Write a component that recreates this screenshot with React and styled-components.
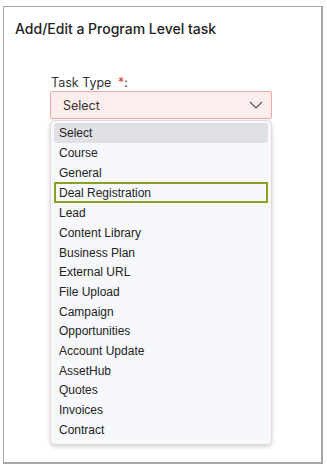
import styled, { createGlobalStyle } from "styled-components";

const options = [
  "Select",
  "Course",
  "General",
  "Deal Registration",
  "Lead",
  "Content Library",
  "Business Plan",
  "External URL",
  "File Upload",
  "Campaign",
  "Opportunities",
  "Account Update",
  "AssetHub",
  "Quotes",
  "Invoices",
  "Contract",
];

export default function App() {
  return (
    <>
      <Global />
      <Panel>
        <Title>Add/Edit a Program Level task</Title>
        <Field>
          <Label>
            Task Type <Req>*</Req>:
          </Label>
          <SelectBox>
            <span>Select</span>
            <svg width="14" height="8" viewBox="0 0 14 8">
              <path
                d="M1 1 L7 7 L13 1"
                fill="none"
                stroke="#555"
                strokeWidth="1.2"
              />
            </svg>
          </SelectBox>
          <Menu>
            {options.map((o, i) => (
              <Option key={o} $selected={i === 0} $focused={i === 3}>
                {o}
              </Option>
            ))}
          </Menu>
        </Field>
      </Panel>
    </>
  );
}

const Global = createGlobalStyle`
  body {
    margin: 0;
    background: #fff;
    font-family: Inter, "Liberation Sans", sans-serif;
  }
`;

const Panel = styled.div`
  box-sizing: border-box;
  margin: 6px 0 0 3px;
  width: 320px;
  height: 458px;
  border: 1px solid #a6a6a6;
  border-right: 2px solid #a6a6a6;
  border-bottom: 2px solid #a6a6a6;
  background: #fff;
  padding: 12px 0 0 11px;
`;

const Title = styled.h1`
  margin: 0;
  font-size: 14px;
  font-weight: 500;
  color: #222;
  line-height: 20px;
`;

const Field = styled.div`
  margin: 35px 0 0 35px;
  width: 223px;
`;

const Label = styled.div`
  padding-left: 1px;
  font-size: 12.5px;
  color: #333;
  line-height: 17px;
`;

const Req = styled.span`
  color: #d33;
  margin-left: 3px;
`;

const SelectBox = styled.div`
  box-sizing: border-box;
  height: 28px;
  width: 222px;
  border: 1px solid #f2a7a7;
  background: #fdeeee;
  border-radius: 2px;
  display: flex;
  align-items: center;
  justify-content: space-between;
  padding: 0 8px 0 12px;
  font-size: 12.5px;
  color: #333;
`;

const Menu = styled.div`
  box-sizing: border-box;
  width: 222px;
  margin-top: 1px;
  border: 1px solid #e8d6d8;
  border-radius: 5px;
  background: #f7f8fb;
  box-shadow: 0 2px 4px rgba(0, 0, 0, 0.18);
  padding: 2px 3px 4px;
  display: flex;
  flex-direction: column;
`;

const Option = styled.div`
  box-sizing: border-box;
  display: flex;
  align-items: center;
  padding-left: ${(p) => (p.$focused ? "3px" : "5px")};
  font-family: "Liberation Sans", Arial, sans-serif;
  font-size: 12px;
  color: #222;
  background: ${(p) => (p.$selected ? "#e0e0e6" : "transparent")};
  border: ${(p) => (p.$focused ? "2px solid #8aa11f" : "none")};
  border-radius: ${(p) => (p.$focused ? "0" : "3px")};
  height: ${(p) => (p.$selected ? "20px" : p.$focused ? "21px" : "19.7px")};
`;
